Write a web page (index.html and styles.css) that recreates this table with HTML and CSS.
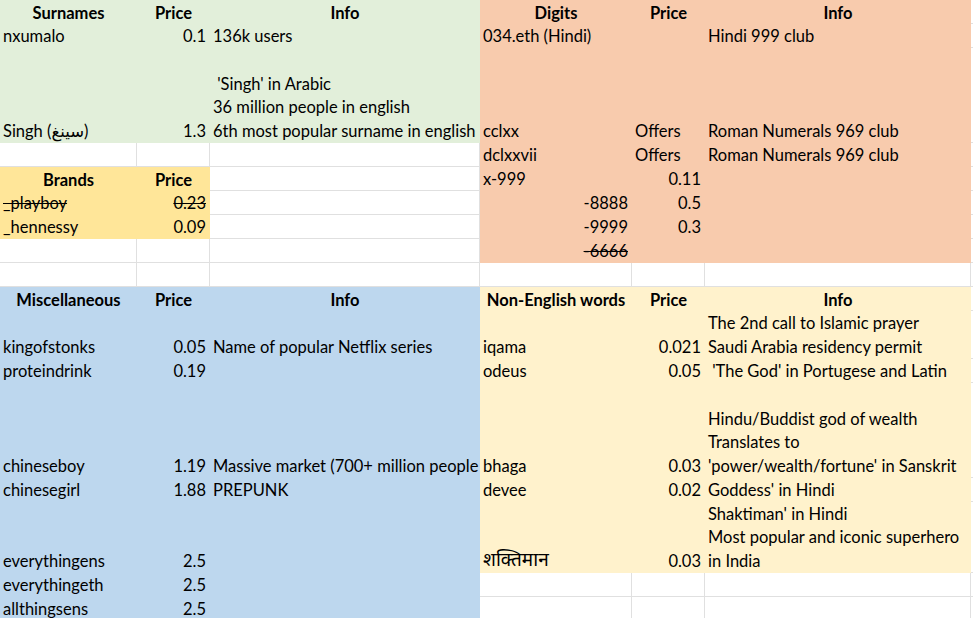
FILE: index.html
```html
<!DOCTYPE html>
<html>
<head>
<meta charset="utf-8">
<link rel="stylesheet" href="styles.css">
</head>
<body>
<div class="sheet">
  <div class="row h1">
    <div class="c g hd">Surnames</div><div class="c g hd">Price</div><div class="c g hd">Info</div>
    <div class="c o hd">Digits</div><div class="c o hd">Price</div><div class="c o hd">Info</div><div class="c"></div>
  </div>
  <div class="row h1">
    <div class="c g">nxumalo</div><div class="c g n">0.1</div><div class="c g">136k users</div>
    <div class="c o">034.eth (Hindi)</div><div class="c o"></div><div class="c o">Hindi 999 club</div><div class="c"></div>
  </div>
  <div class="row h4">
    <div class="c g">Singh (سينغ)</div><div class="c g n">1.3</div>
    <div class="c g"><span class="ln">&nbsp;'Singh' in Arabic</span><span class="ln">36 million people in english</span><span class="ln">6th most popular surname in english</span></div>
    <div class="c o">cclxx</div><div class="c o">Offers</div><div class="c o">Roman Numerals 969 club</div><div class="c"></div>
  </div>
  <div class="row h1">
    <div class="c"></div><div class="c"></div><div class="c"></div>
    <div class="c o">dclxxvii</div><div class="c o">Offers</div><div class="c o">Roman Numerals 969 club</div><div class="c"></div>
  </div>
  <div class="row h1">
    <div class="c y hd">Brands</div><div class="c y hd">Price</div><div class="c"></div>
    <div class="c o">x-999</div><div class="c o n">0.11</div><div class="c o"></div><div class="c"></div>
  </div>
  <div class="row h1">
    <div class="c y"><s>_playboy</s></div><div class="c y n"><s>0.23</s></div><div class="c"></div>
    <div class="c o n">-8888</div><div class="c o n">0.5</div><div class="c o"></div><div class="c"></div>
  </div>
  <div class="row h1">
    <div class="c y">_hennessy</div><div class="c y n">0.09</div><div class="c"></div>
    <div class="c o n">-9999</div><div class="c o n">0.3</div><div class="c o"></div><div class="c"></div>
  </div>
  <div class="row h1">
    <div class="c"></div><div class="c"></div><div class="c"></div>
    <div class="c o n"><s>-6666</s></div><div class="c o"></div><div class="c o"></div><div class="c"></div>
  </div>
  <div class="row h1">
    <div class="c"></div><div class="c"></div><div class="c"></div>
    <div class="c"></div><div class="c"></div><div class="c"></div><div class="c"></div>
  </div>

  <div class="row h1">
    <div class="c b hd">Miscellaneous</div><div class="c b hd">Price</div><div class="c b hd">Info</div>
    <div class="c l hd">Non-English words</div><div class="c l hd">Price</div><div class="c l hd">Info</div><div class="c"></div>
  </div>
  <div class="row h2">
    <div class="c b">kingofstonks</div><div class="c b n">0.05</div><div class="c b">Name of popular Netflix series</div>
    <div class="c l">iqama</div><div class="c l n">0.021</div>
    <div class="c l"><span class="ln">The 2nd call to Islamic prayer</span><span class="ln">Saudi Arabia residency permit</span></div><div class="c"></div>
  </div>
  <div class="row h1">
    <div class="c b">proteindrink</div><div class="c b n">0.19</div><div class="c b"></div>
    <div class="c l">odeus</div><div class="c l n">0.05</div><div class="c l">&nbsp;'The God' in Portugese and Latin</div><div class="c"></div>
  </div>
  <div class="row h4">
    <div class="c b">chineseboy</div><div class="c b n">1.19</div><div class="c b clip">Massive market (700+ million people</div>
    <div class="c l">bhaga</div><div class="c l n">0.03</div>
    <div class="c l"><span class="ln">Hindu/Buddist god of wealth</span><span class="ln">Translates to</span><span class="ln">'power/wealth/fortune' in Sanskrit</span></div><div class="c"></div>
  </div>
  <div class="row h1">
    <div class="c b">chinesegirl</div><div class="c b n">1.88</div><div class="c b">PREPUNK</div>
    <div class="c l">devee</div><div class="c l n">0.02</div><div class="c l">Goddess' in Hindi</div><div class="c"></div>
  </div>
  <div class="row h3">
    <div class="c b">everythingens</div><div class="c b n">2.5</div><div class="c b"></div>
    <div class="c l deva">शक्तिमान</div><div class="c l n">0.03</div>
    <div class="c l"><span class="ln">Shaktiman' in Hindi</span><span class="ln">Most popular and iconic superhero</span><span class="ln">in India</span></div><div class="c"></div>
  </div>
  <div class="row h1">
    <div class="c b">everythingeth</div><div class="c b n">2.5</div><div class="c b"></div>
    <div class="c"></div><div class="c"></div><div class="c"></div><div class="c"></div>
  </div>
  <div class="row h1">
    <div class="c b">allthingsens</div><div class="c b n">2.5</div><div class="c b"></div>
    <div class="c"></div><div class="c"></div><div class="c"></div><div class="c"></div>
  </div>
</div>
</body>
</html>
```
FILE: styles.css
```css
html, body {
  margin: 0;
  padding: 0;
  background: #ffffff;
  overflow: hidden;
}
body {
  width: 973px;
  height: 618px;
  font-family: Lato, "Noto Sans", "DejaVu Sans", sans-serif;
  font-size: 16.5px;
  color: #000000;
}
.sheet {
  display: flex;
  flex-direction: column;
}
.row {
  display: grid;
  grid-template-columns: 137px 73px 270px 152px 73px 266px 10px;
}
.h1 { height: 24px; }
.h2 { height: 48px; }
.h3 { height: 71px; }
.h4 { height: 95px; }
.c {
  box-sizing: border-box;
  box-shadow: inset -1px -1px 0 #e0e0e0;
  padding: 0 3px;
  display: flex;
  flex-direction: column;
  justify-content: flex-end;
  overflow: hidden;
  white-space: nowrap;
  line-height: 23.5px;
}
.clip { padding-right: 0; }
.ln { display: block; }
.hd { font-weight: bold; text-align: center; line-height: 21.5px; }
.n { text-align: right; padding-right: 4px; }
.g { background: #e2efda; box-shadow: none; }
.o { background: #f8cbad; box-shadow: none; }
.y { background: #ffe699; box-shadow: none; }
.b { background: #bdd7ee; box-shadow: none; }
.l { background: #fff2cc; box-shadow: none; }
.deva {
  font-family: "Noto Sans Devanagari", "Lohit Devanagari", "Noto Sans", sans-serif;
  font-size: 19px;
}
s { text-decoration: line-through; }
```
